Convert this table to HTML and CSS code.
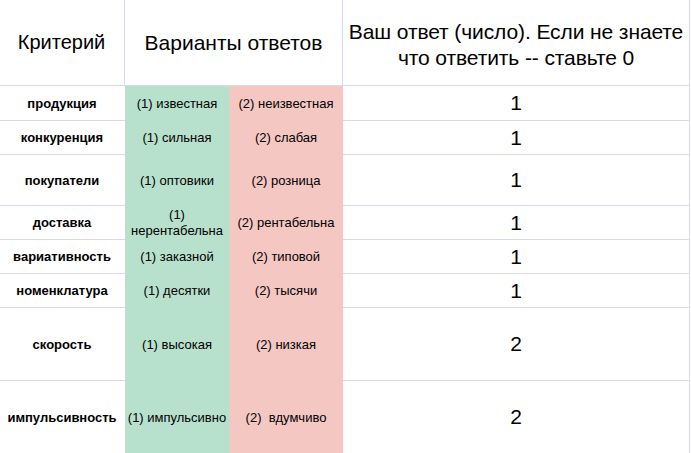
FILE: index.html
```html
<!DOCTYPE html>
<html lang="ru">
<head>
<meta charset="utf-8">
<title>Критерии</title>
<link rel="stylesheet" href="styles.css">
</head>
<body>
<div class="sheet">
  <div class="hcell h-crit">Критерий</div>
  <div class="hcell h-var">Варианты ответов</div>
  <div class="hcell h-ans">Ваш ответ (число). Если не знаете<br>что ответить -- ставьте 0</div>

  <div class="label">продукция</div>
  <div class="opt yes">(1) известная</div>
  <div class="opt no">(2) неизвестная</div>
  <div class="num">1</div>

  <div class="label">конкуренция</div>
  <div class="opt yes">(1) сильная</div>
  <div class="opt no">(2) слабая</div>
  <div class="num">1</div>

  <div class="label">покупатели</div>
  <div class="opt yes">(1) оптовики</div>
  <div class="opt no">(2) розница</div>
  <div class="num">1</div>

  <div class="label">доставка</div>
  <div class="opt yes">(1) нерентабельна</div>
  <div class="opt no">(2) рентабельна</div>
  <div class="num">1</div>

  <div class="label">вариативность</div>
  <div class="opt yes">(1) заказной</div>
  <div class="opt no">(2) типовой</div>
  <div class="num">1</div>

  <div class="label">номенклатура</div>
  <div class="opt yes">(1) десятки</div>
  <div class="opt no">(2) тысячи</div>
  <div class="num">1</div>

  <div class="label">скорость</div>
  <div class="opt yes">(1) высокая</div>
  <div class="opt no">(2) низкая</div>
  <div class="num">2</div>

  <div class="label">импульсивность</div>
  <div class="opt yes">(1) импульсивно</div>
  <div class="opt no">(2)&nbsp; вдумчиво</div>
  <div class="num">2</div>
</div>
</body>
</html>
```

FILE: styles.css
```css
* { box-sizing: border-box; }
html, body {
  margin: 0;
  padding: 0;
  background: #fff;
  overflow: hidden;
}
body {
  font-family: "Liberation Sans", Arial, sans-serif;
  color: #000;
}
.sheet {
  display: grid;
  grid-template-columns: 125px 104px 114px 347px;
  grid-template-rows: 86px 35px 34px 51px 34px 34px 34px 73px 73px;
  width: 691px;
}
.hcell {
  display: flex;
  align-items: center;
  justify-content: center;
  text-align: center;
  font-size: 21px;
  border-bottom: 1px solid #d5dbe7;
  border-right: 1px solid #d5dbe7;
}
.h-crit { font-size: 20px; padding-right: 1px; }
.h-var { grid-column: 2 / 4; }
.h-ans {
  line-height: 26px;
  white-space: nowrap;
  padding-top: 4px;
  letter-spacing: -0.1px;
}
.label {
  display: flex;
  align-items: center;
  justify-content: center;
  font-size: 13px;
  font-weight: bold;
  border-bottom: 1px solid #d5dbe7;
  padding-right: 1px;
}
.opt {
  display: flex;
  align-items: center;
  justify-content: center;
  text-align: center;
  font-size: 13px;
  line-height: 16px;
  padding: 0 1px;
}
.yes { background: #b7e1cd; }
.no { background: #f4c7c3; }
.num {
  display: flex;
  align-items: center;
  justify-content: center;
  font-size: 21px;
  border-bottom: 1px solid #d5dbe7;
  border-right: 1px solid #d5dbe7;
}
```
